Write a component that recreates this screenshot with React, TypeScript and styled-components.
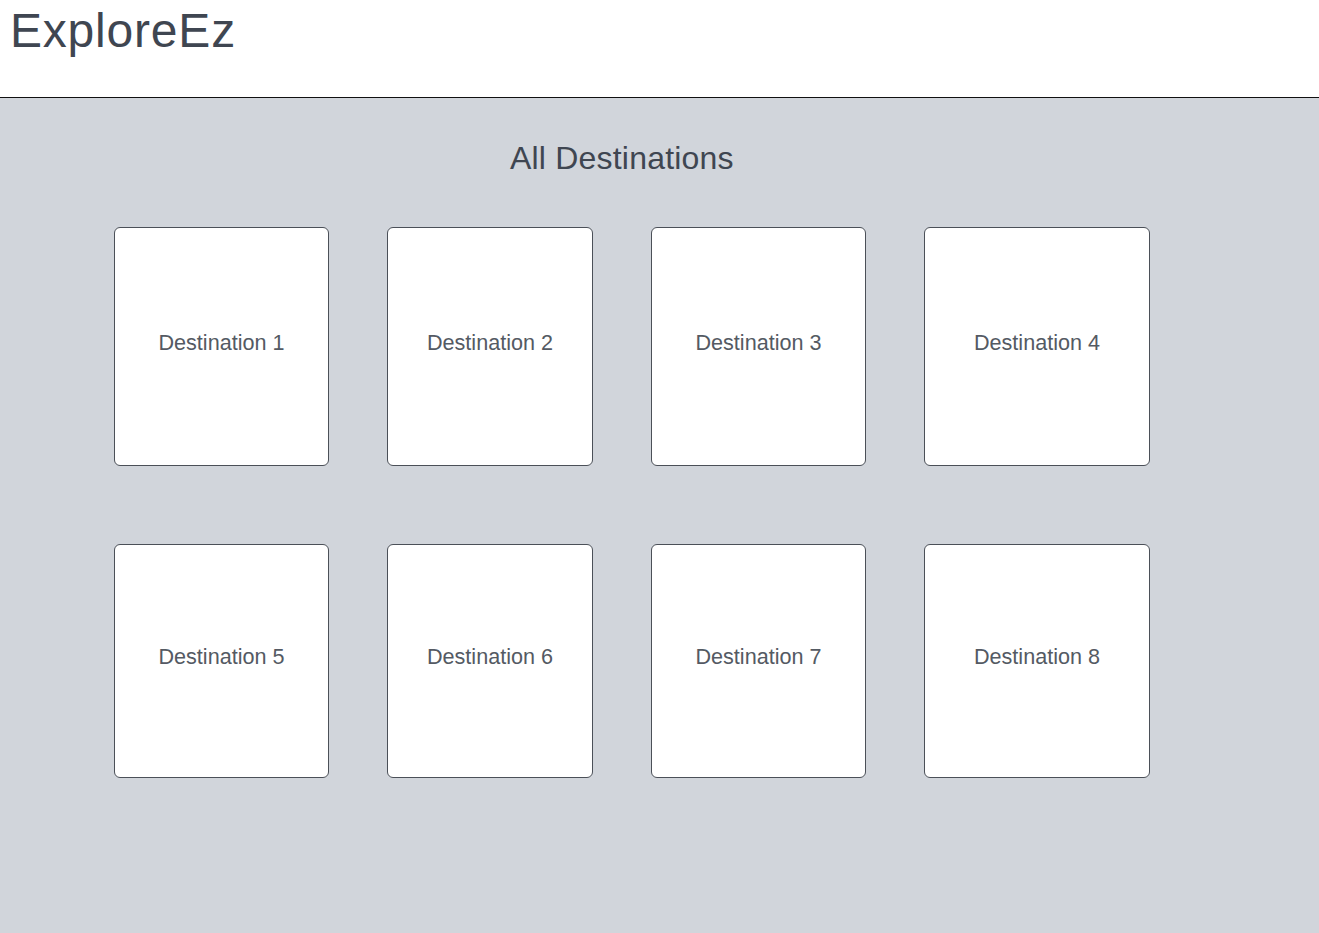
import styled, { createGlobalStyle } from 'styled-components';

const destinations = [
  'Destination 1',
  'Destination 2',
  'Destination 3',
  'Destination 4',
  'Destination 5',
  'Destination 6',
  'Destination 7',
  'Destination 8',
];

export default function App() {
  return (
    <>
      <GlobalStyle />
      <Page>
        <Header>
          <Logo>ExploreEz</Logo>
        </Header>
        <Main>
          <SectionTitle>All Destinations</SectionTitle>
          <CardGrid>
            {destinations.map((name) => (
              <Card key={name}>
                <CardLabel>{name}</CardLabel>
              </Card>
            ))}
          </CardGrid>
        </Main>
      </Page>
    </>
  );
}

const GlobalStyle = createGlobalStyle`
  html, body {
    margin: 0;
    padding: 0;
    background: #d1d5db;
  }

  body {
    font-family: 'Liberation Sans', Arial, sans-serif;
  }

  * {
    box-sizing: border-box;
  }
`;

const Page = styled.div`
  display: flex;
  flex-direction: column;
  min-height: 933px;
`;

const Header = styled.header`
  display: flex;
  align-items: flex-start;
  height: 98px;
  padding: 3px 10px 0;
  background: #ffffff;
  border-bottom: 1px solid #111111;
`;

const Logo = styled.h1`
  margin: 0;
  font-size: 48px;
  font-weight: 400;
  line-height: 55px;
  letter-spacing: 0.8px;
  color: #3f4651;
`;

const Main = styled.main`
  flex: 1;
  padding: 42px 0 0 114px;
  background: #d1d5db;
`;

const SectionTitle = styled.h2`
  margin: 0 0 50px 396px;
  font-size: 32px;
  font-weight: 400;
  line-height: 37px;
  letter-spacing: 0.2px;
  color: #3f4651;
`;

const CardGrid = styled.div`
  display: grid;
  grid-template-columns: 215px 206px 215px 226px;
  grid-template-rows: 239px 234px;
  column-gap: 58px;
  row-gap: 78px;
`;

const Card = styled.div`
  display: flex;
  align-items: center;
  justify-content: center;
  background: #ffffff;
  border: 1px solid #4b5058;
  border-radius: 6px;
`;

const CardLabel = styled.span`
  font-size: 21.6px;
  color: #545a63;
  margin-bottom: 8px;
`;
